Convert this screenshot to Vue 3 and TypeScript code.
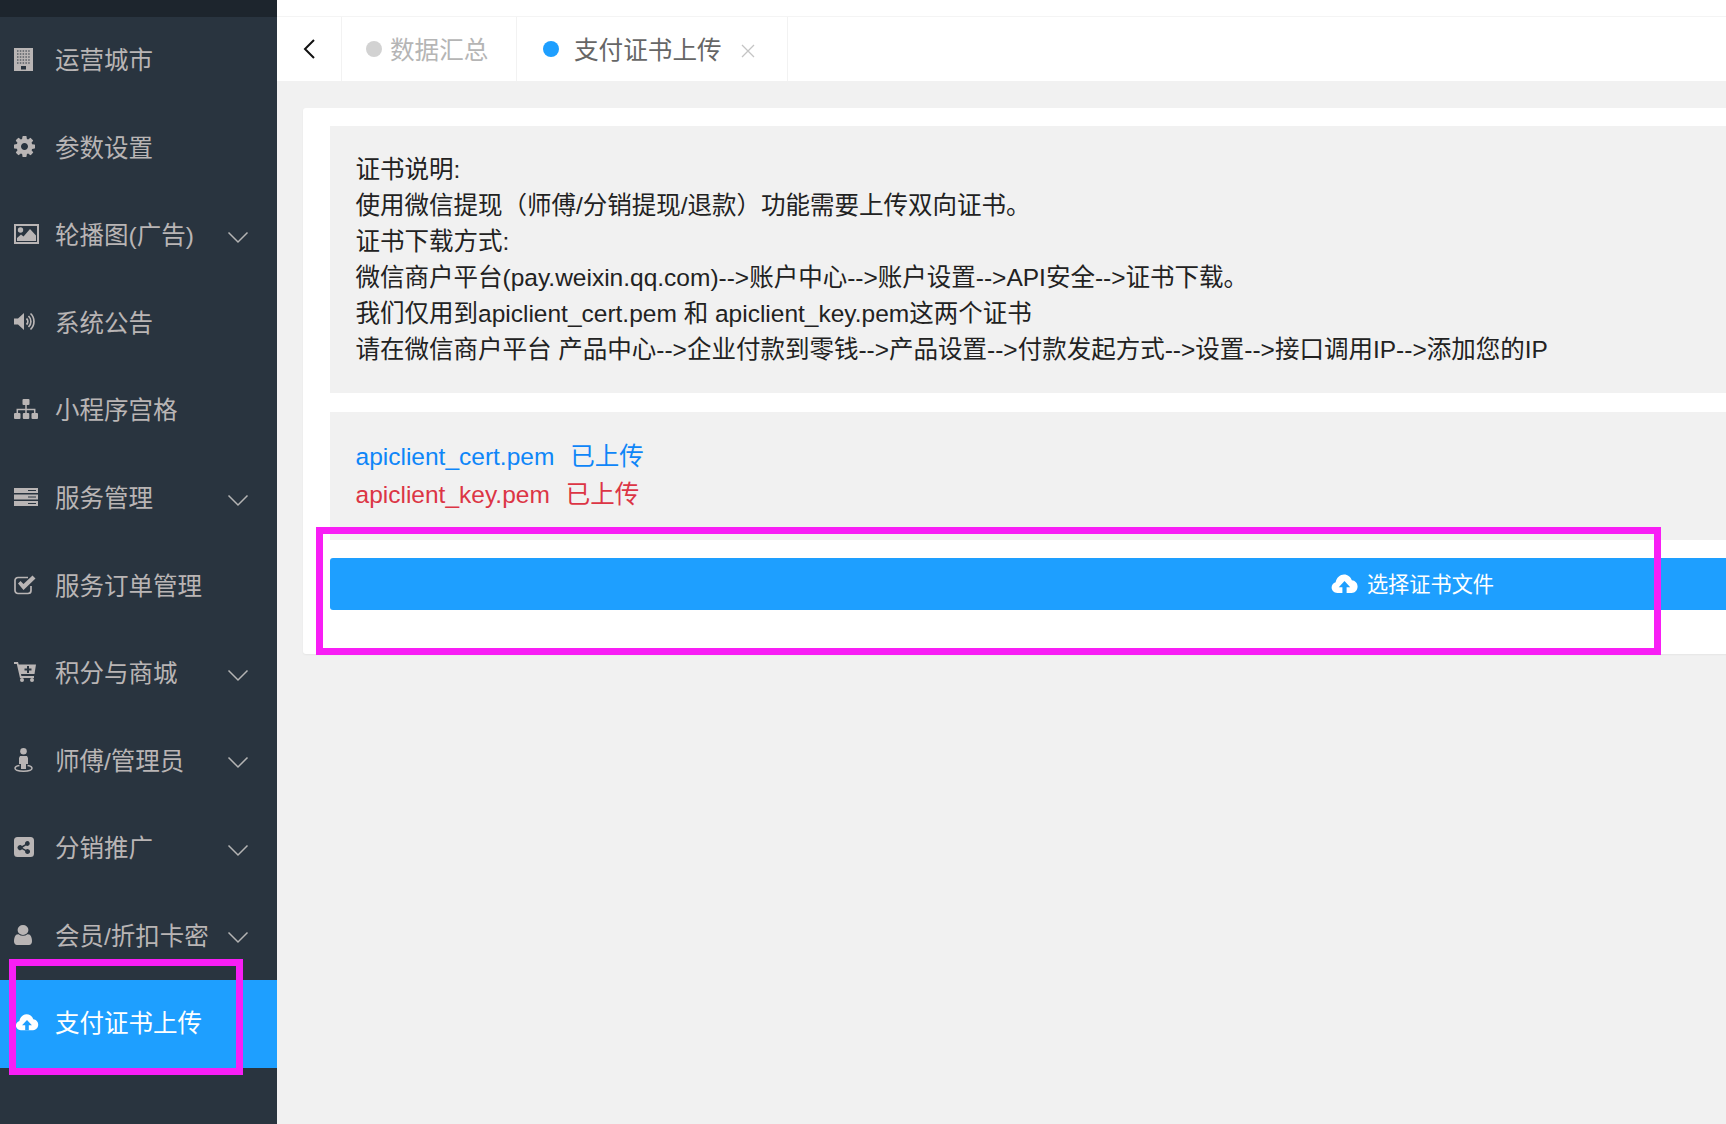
<script setup lang="ts">
interface MenuItem { label: string; icon: string; arrow?: boolean; active?: boolean }
const menu: MenuItem[] = [
  { label: '运营城市', icon: 'building' },
  { label: '参数设置', icon: 'cog' },
  { label: '轮播图(广告)', icon: 'picture', arrow: true },
  { label: '系统公告', icon: 'volume' },
  { label: '小程序宫格', icon: 'sitemap' },
  { label: '服务管理', icon: 'server', arrow: true },
  { label: '服务订单管理', icon: 'check' },
  { label: '积分与商城', icon: 'cart', arrow: true },
  { label: '师傅/管理员', icon: 'street', arrow: true },
  { label: '分销推广', icon: 'share', arrow: true },
  { label: '会员/折扣卡密', icon: 'user', arrow: true },
  { label: '支付证书上传', icon: 'cloud', active: true },
]
const notes: string[] = [
  '证书说明:',
  '使用微信提现（师傅/分销提现/退款）功能需要上传双向证书。',
  '证书下载方式:',
  '微信商户平台(pay.weixin.qq.com)-->账户中心-->账户设置-->API安全-->证书下载。',
  '我们仅用到apiclient_cert.pem 和 apiclient_key.pem这两个证书',
  '请在微信商户平台 产品中心-->企业付款到零钱-->产品设置-->付款发起方式-->设置-->接口调用IP-->添加您的IP',
]
const cloudPath =
  'M6.500 21C3 21 .5 18.400 .5 15.300c0-2.600 1.700-4.800 4.200-5.500C5.500 4.800 9.400 1.500 13.500 1.500c3.900 0 7.100 2.500 8.200 6.200 3.300.2 6 3 6 6.500 0 3.800-2.700 6.800-6.200 6.800z'
const arrowPath = 'M14 8.500l-6 6.500h3.800v6h4.400v-6H20z'
</script>

<template>
  <div class="shell">
    <aside class="side">
      <div class="side-top"></div>
      <nav class="menu">
        <a v-for="m in menu" :key="m.label" class="item" :class="{ active: m.active }">
          <span class="ico">
            <svg v-if="m.icon === 'building'" width="19" height="23" viewBox="0 0 19 23">
              <rect width="19" height="23" fill="currentColor" />
              <path d="M3 3h13M3 6h13M3 9h13M3 12h13M3 15h13" stroke="#29343f" stroke-width="1.200" stroke-dasharray="1.500 1.300" fill="none" />
              <rect x="7" y="18" width="5" height="3.500" fill="#29343f" />
            </svg>
            <svg v-else-if="m.icon === 'cog'" width="21" height="21" viewBox="128 128 1536 1536">
              <path fill="currentColor" d="M1152 896q0-106-75-181t-181-75-181 75-75 181 75 181 181 75 181-75 75-181zm512-109v222q0 12-8 23t-20 13l-185 28q-19 54-39 91 35 50 107 138 10 12 10 25t-9 23q-27 37-99 108t-94 71q-12 0-26-9l-138-108q-44 23-91 38-16 136-29 186-7 28-36 28h-222q-14 0-24.500-8.500t-11.500-21.500l-28-184q-49-16-90-37l-141 107q-10 9-25 9-14 0-25-11-126-114-165-168-7-10-7-23 0-12 8-23 15-21 51-66.500t54-70.500q-27-50-41-99l-183-27q-13-2-21-12.500t-8-23.500v-222q0-12 8-23t19-13l186-28q14-46 39-92-40-57-107-138-10-12-10-24 0-10 9-23 26-36 98.500-107.500t94.500-71.500q13 0 26 10l138 107q44-23 91-38 16-136 29-186 7-28 36-28h222q14 0 24.500 8.500t11.500 21.500l28 184q49 16 90 37l142-107q9-9 24-9 13 0 25 10 129 119 165 170 7 8 7 22 0 12-8 23-15 21-51 66.500t-54 70.500q26 50 41 98l183 28q13 2 21 12.500t8 23.500z" />
            </svg>
            <svg v-else-if="m.icon === 'picture'" width="25" height="20" viewBox="0 0 25 20">
              <rect x="1" y="1" width="23" height="18" fill="none" stroke="currentColor" stroke-width="2" />
              <circle cx="6.500" cy="6" r="2.700" fill="currentColor" />
              <path d="M3 17v-3l4-3.500 2.500 2L16 5l6 6.500V17z" fill="currentColor" />
            </svg>
            <svg v-else-if="m.icon === 'volume'" width="22" height="19" viewBox="0 0 22 19">
              <path d="M0 6.500h4L10 1v17l-6-5.500H0z" fill="currentColor" />
              <path d="M12.500 6.500a4 4 0 0 1 0 6M14.500 4a7.500 7.500 0 0 1 0 11M16.500 1.500a11 11 0 0 1 0 16" fill="none" stroke="currentColor" stroke-width="1.700" />
            </svg>
            <svg v-else-if="m.icon === 'sitemap'" width="24" height="20" viewBox="0 0 24 20">
              <rect x="8.500" y="0" width="7" height="6" rx="1" fill="currentColor" />
              <rect x="0" y="14" width="6.500" height="6" rx="1" fill="currentColor" />
              <rect x="8.800" y="14" width="6.500" height="6" rx="1" fill="currentColor" />
              <rect x="17.500" y="14" width="6.500" height="6" rx="1" fill="currentColor" />
              <path d="M12 6v8M3.300 14v-3.500h17.400V14" fill="none" stroke="currentColor" stroke-width="1.500" />
            </svg>
            <svg v-else-if="m.icon === 'server'" width="24" height="18" viewBox="0 0 24 18">
              <rect width="24" height="5" fill="currentColor" />
              <rect y="6.500" width="24" height="5" fill="currentColor" />
              <rect y="13" width="24" height="5" fill="currentColor" />
              <path d="M14 2.500h8M14 9h8M14 15.500h8" stroke="#29343f" stroke-width="1" />
            </svg>
            <svg v-else-if="m.icon === 'check'" width="22" height="20" viewBox="0 0 22 20">
              <path d="M17 11v4.500a3 3 0 0 1-3 3H4a3 3 0 0 1-3-3v-10a3 3 0 0 1 3-3h10" fill="none" stroke="currentColor" stroke-width="1.700" />
              <path d="M4 8.500l2.500-2.500 3 3L18.500 .5 21.500 3.500 9.500 15z" fill="currentColor" />
            </svg>
            <svg v-else-if="m.icon === 'cart'" width="22" height="20" viewBox="0 0 22 20">
              <path fill-rule="evenodd" fill="currentColor" d="M0 0h4l.7 2.500H22l-1.500 9.500H7l.4 2H20v2H6L2.800 2H0zM13 4v2.500h-2.500v2H13V11h2V8.500h2.500v-2H15V4z" />
              <circle cx="8" cy="18" r="2" fill="currentColor" />
              <circle cx="18" cy="18" r="2" fill="currentColor" />
            </svg>
            <svg v-else-if="m.icon === 'street'" width="19" height="24" viewBox="0 0 19 24">
              <circle cx="9.500" cy="3.300" r="3.300" fill="currentColor" />
              <path d="M6 8h7l1 2v6h-2v5H7v-5H5v-6z" fill="currentColor" />
              <path d="M5.500 17.500C2.500 18 1 19 1 20.300c0 1.700 3.800 2.900 8.500 2.900s8.500-1.200 8.500-2.900c0-1.300-1.500-2.300-4.500-2.800" fill="none" stroke="currentColor" stroke-width="1.500" />
            </svg>
            <svg v-else-if="m.icon === 'share'" width="20" height="20" viewBox="0 0 20 20">
              <path fill-rule="evenodd" fill="currentColor" d="M3.500 0h13A3.500 3.500 0 0 1 20 3.500v13a3.500 3.500 0 0 1-3.500 3.500h-13A3.500 3.500 0 0 1 0 16.500v-13A3.500 3.500 0 0 1 3.500 0zM13.500 4a2.500 2.500 0 0 0-2.400 3.200L8 9a2.500 2.500 0 1 0 0 3.300l3.100 1.800a2.500 2.500 0 1 0 .8-1.400L8.800 10.900a2.500 2.500 0 0 0 0-.5l3.100-1.800A2.500 2.500 0 1 0 13.500 4z" />
            </svg>
            <svg v-else-if="m.icon === 'user'" width="18" height="20" viewBox="256 128 1280 1536" preserveAspectRatio="none">
              <path fill="currentColor" d="M1536 1399q0 109-62.500 187t-150.500 78h-854q-88 0-150.500-78t-62.500-187q0-85 8.500-160.500t31.500-152 58.500-131 94-89 134.500-34.500q131 128 313 128t313-128q76 0 134.500 34.500t94 89 58.500 131 31.500 152 8.500 160.500zm-256-887q0 159-112.500 271.500t-271.500 112.500-271.500-112.500-112.500-271.500 112.500-271.500 271.500-112.500 271.500 112.500 112.500 271.500z" />
            </svg>
            <svg v-else width="24" height="18" viewBox="0 0 28 22" class="cloud-menu">
              <path fill="#fff" :d="cloudPath" />
              <path fill="#1e9fff" :d="arrowPath" />
            </svg>
          </span>
          <span class="label">{{ m.label }}</span>
          <svg v-if="m.arrow" class="arrow" width="22" height="13" viewBox="0 0 22 13">
            <path d="M1.500 1.500L11 11l9.500-9.500" fill="none" stroke="currentColor" stroke-width="1.500" />
          </svg>
        </a>
      </nav>
      <div class="mark mark-side"></div>
    </aside>

    <main class="main">
      <div class="top-line"></div>
      <div class="tabs">
        <div class="back">
          <svg width="14" height="22" viewBox="0 0 14 22">
            <path d="M12 2L3 11l9 9" fill="none" stroke="#111" stroke-width="2" />
          </svg>
        </div>
        <div class="tab">
          <i class="dot grey"></i><span class="tab-off">数据汇总</span>
        </div>
        <div class="tab on">
          <i class="dot blue"></i><span class="tab-on">支付证书上传</span>
          <svg class="close" width="14" height="14" viewBox="0 0 14 14">
            <path d="M1 1l12 12M13 1L1 13" stroke="#c4c4c4" stroke-width="1.300" fill="none" />
          </svg>
        </div>
      </div>

      <section class="content">
        <div class="card">
          <div class="panel notes">
            <p v-for="n in notes" :key="n">{{ n }}</p>
          </div>
          <div class="panel files">
            <p class="ok">apiclient_cert.pem<span class="state">已上传</span></p>
            <p class="bad">apiclient_key.pem<span class="state">已上传</span></p>
          </div>
          <button class="upload" type="button">
            <svg width="27" height="21" viewBox="0 0 28 22">
              <path fill="#fff" :d="cloudPath" />
              <path fill="#1e9fff" :d="arrowPath" />
            </svg>
            <span>选择证书文件</span>
          </button>
        </div>
      </section>
      <div class="mark mark-main"></div>
    </main>
  </div>
</template>

<style scoped>
.shell {
  display: flex;
  width: 1726px;
  height: 1124px;
  overflow: hidden;
  background: #f1f1f1;
  font-family: "Liberation Sans", "Noto Sans CJK SC", sans-serif;
}
.side {
  position: relative;
  flex: 0 0 277px;
  background: #29343f;
}
.side-top {
  height: 17px;
  background: #1d252d;
}
.menu {
  display: flex;
  flex-direction: column;
}
.item {
  display: flex;
  align-items: center;
  height: 87.55px;
  padding-left: 14px;
  color: #b9b5b5;
  font-size: 24.5px;
  white-space: nowrap;
}
.item.active {
  background: #1e9fff;
  color: #fff;
}
.ico {
  display: flex;
  align-items: center;
  flex: 0 0 41px;
  padding-bottom: 3px;
  box-sizing: border-box;
}
.cloud-menu {
  margin-left: 1px;
}
.label {
  flex: 1;
  padding-bottom: 4px;
}
.arrow {
  margin-right: 28px;
  margin-top: 3px;
  color: #b4b4b4;
}
.mark {
  position: absolute;
  border: 7px solid #f81ef5;
  box-sizing: border-box;
  pointer-events: none;
}
.mark-side {
  left: 9px;
  top: 959px;
  width: 234px;
  height: 116px;
}
.main {
  position: relative;
  flex: 1;
  min-width: 0;
}
.top-line {
  height: 17px;
  background: #fff;
  border-bottom: 1px solid #f4f4f4;
  box-sizing: border-box;
}
.tabs {
  display: flex;
  height: 64px;
  background: #fff;
}
.back {
  display: flex;
  align-items: center;
  justify-content: center;
  width: 65px;
  box-sizing: border-box;
  border-right: 1px solid #f2f2f2;
}
.tab {
  display: flex;
  align-items: center;
  height: 100%;
  box-sizing: border-box;
  border-right: 1px solid #f2f2f2;
  padding-left: 24px;
  width: 175px;
  font-size: 24.6px;
}
.tab.on {
  width: 271px;
}
.tab span {
  padding-bottom: 2px;
}
.dot {
  display: block;
  border-radius: 50%;
  width: 16px;
  height: 16px;
  margin-right: 8px;
}
.dot.grey {
  background: #d2d2d2;
}
.dot.blue {
  background: #1e9fff;
  margin-right: 15px;
}
.tab.on .dot {
  margin-left: 2px;
}
.tab-off {
  color: #b5b5b5;
}
.tab-on {
  color: #666;
}
.close {
  margin-left: 19px;
  margin-top: 4px;
}
.content {
  padding: 27px 0 0 26px;
}
.card {
  width: 2219px;
  box-sizing: border-box;
  padding: 18px 27px 44px;
  background: #fff;
  border-radius: 3px;
  box-shadow: 0 1px 2px rgba(0, 0, 0, 0.05);
}
.panel {
  background: #f1f1f1;
  font-size: 24.5px;
  color: #222;
  padding: 26px 26px 25px 25.500px;
}
.panel p {
  margin: 0;
}
.notes {
  height: 267px;
  box-sizing: border-box;
  line-height: 36px;
}
.files {
  margin-top: 19px;
  height: 128px;
  box-sizing: border-box;
  line-height: 38px;
}
.ok {
  color: #0e86f8;
}
.bad {
  color: #dc3545;
}
.state {
  margin-left: 16px;
}
.upload {
  display: flex;
  align-items: center;
  justify-content: center;
  gap: 9px;
  width: 100%;
  height: 52px;
  margin-top: 18px;
  padding-bottom: 2px;
  border: 0;
  border-radius: 3px;
  background: #1e9fff;
  color: #fff;
  font: inherit;
  font-size: 21.2px;
}
.upload span {
  padding-bottom: 2px;
}
.mark-main {
  left: 39px;
  top: 527px;
  width: 1345px;
  height: 128px;
}
</style>

<style>
html,
body {
  margin: 0;
  overflow: hidden;
}
</style>
